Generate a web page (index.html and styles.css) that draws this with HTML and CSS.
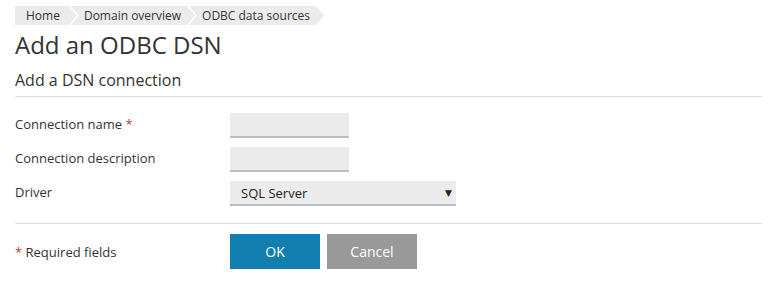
FILE: index.html
```html
<!DOCTYPE html>
<html>
<head>
<meta charset="utf-8">
<link rel="stylesheet" href="styles.css">
</head>
<body>
<div class="page">
  <ul class="crumbs">
    <li class="crumb first">Home</li>
    <li class="crumb">Domain overview</li>
    <li class="crumb">ODBC data sources</li>
  </ul>
  <h1 class="title">Add an ODBC DSN</h1>
  <h2 class="section">Add a DSN connection</h2>
  <form class="form">
    <div class="row">
      <label class="label">Connection name <span class="req">*</span></label>
      <input class="input" type="text">
    </div>
    <div class="row">
      <label class="label">Connection description</label>
      <input class="input" type="text">
    </div>
    <div class="row">
      <label class="label">Driver</label>
      <div class="select"><span>SQL Server</span><span class="arrow">▼</span></div>
    </div>
    <div class="footer">
      <div class="note"><span class="req">*</span> Required fields</div>
      <div class="buttons">
        <button type="button" class="btn ok">OK</button>
        <button type="button" class="btn cancel">Cancel</button>
      </div>
    </div>
  </form>
</div>
</body>
</html>
```
FILE: styles.css
```css
html, body { margin: 0; padding: 0; background: #fff; }
body { font-family: "Open Sans", "DejaVu Sans", sans-serif; color: #333; }
.page { padding: 6px 13px 0 15px; }
.crumbs { list-style: none; margin: 0; padding: 0; display: flex; height: 19px; }
.crumb {
  background: #ebebeb; font-size: 12px; line-height: 19px; color: #333;
  padding: 0 14px 0 13px; margin-left: -6px;
  clip-path: polygon(0 0, calc(100% - 8px) 0, 100% 50%, calc(100% - 8px) 100%, 0 100%, 8px 50%);
}
.crumb.first { padding-left: 11px; padding-right: 17px; margin-left: 0; clip-path: polygon(0 0, calc(100% - 8px) 0, 100% 50%, calc(100% - 8px) 100%, 0 100%); }
.title { font-size: 24px; font-weight: 400; line-height: 30px; margin: 5px 0 0; color: #333; }
.section { font-size: 16px; font-weight: 400; line-height: 22px; margin: 9px 0 0; padding-bottom: 5px; border-bottom: 1px solid #ddd; color: #333; }
.form { margin: 16px 0 0; }
.row { display: grid; grid-template-columns: 215px auto; align-items: start; margin-bottom: 9px; }
.label { font-size: 13px; line-height: 18px; padding-top: 2px; color: #333; }
.req { color: #c0392b; }
.input { width: 119px; height: 23px; box-sizing: content-box; padding: 0; border: 0; border-bottom: 2px solid #b7bfc4; background: #ebebeb; margin: 0; }
.select { width: 211px; height: 23px; padding: 0 4px 0 11px; border-bottom: 2px solid #b7bfc4; background: #ebebeb; display: flex; justify-content: space-between; align-items: center; font-size: 13px; color: #222; }
.arrow { font-size: 9px; }
.footer { border-top: 1px solid #ddd; margin-top: 17px; padding-top: 10px; display: grid; grid-template-columns: 215px auto; align-items: center; }
.note { font-size: 13px; }
.buttons { display: flex; gap: 7px; }
.btn { width: 90px; height: 35px; border: 0; color: #fff; font-family: inherit; font-size: 14px; padding: 0; }
.ok { background: #127fb0; }
.cancel { background: #999; }
```
